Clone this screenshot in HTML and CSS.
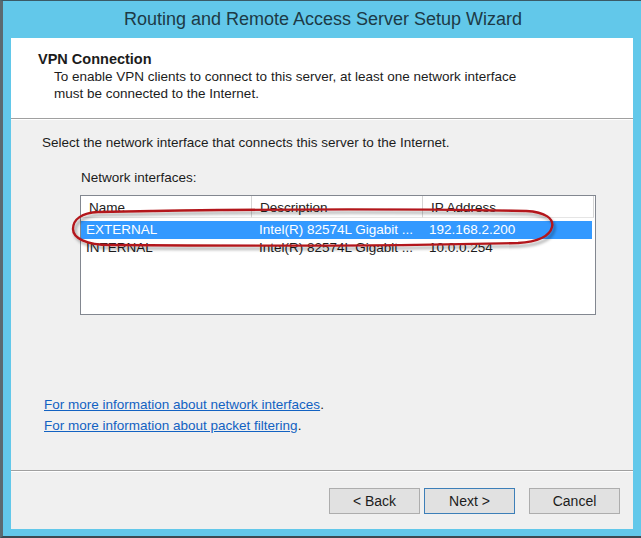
FILE: index.html
```html
<!DOCTYPE html>
<html>
<head>
<meta charset="utf-8">
<link rel="stylesheet" href="styles.css">
</head>
<body>
<div class="window">
  <div class="titlebar">Routing and Remote Access Server Setup Wizard</div>
  <div class="client">
    <div class="header">
      <div class="h-title">VPN Connection</div>
      <div class="h-sub">To enable VPN clients to connect to this server, at least one network interface<br>must be connected to the Internet.</div>
    </div>
    <div class="body">
      <div class="prompt">Select the network interface that connects this server to the Internet.</div>
      <div class="label">Network interfaces:</div>
      <div class="listview">
        <div class="lv-head">
          <div class="col c1">Name</div>
          <div class="col c2">Description</div>
          <div class="col c3">IP Address</div>
        </div>
        <div class="row selected">
          <div class="cell c1">EXTERNAL</div>
          <div class="cell c2">Intel(R) 82574L Gigabit ...</div>
          <div class="cell c3">192.168.2.200</div>
        </div>
        <div class="row">
          <div class="cell c1">INTERNAL</div>
          <div class="cell c2">Intel(R) 82574L Gigabit ...</div>
          <div class="cell c3">10.0.0.254</div>
        </div>
      </div>
      <div class="links">
        <div class="link-line"><a class="link" href="#">For more information about network interfaces</a>.</div>
        <div class="link-line"><a class="link" href="#">For more information about packet filtering</a>.</div>
      </div>
    </div>
    <div class="footer">
      <button class="btn">&lt; Back</button>
      <button class="btn default">Next &gt;</button>
      <button class="btn cancel">Cancel</button>
    </div>
  </div>
  <svg class="annotation" width="641" height="538" viewBox="0 0 641 538">
    <defs>
      <filter id="sh" x="-5%" y="-50%" width="110%" height="200%">
        <feDropShadow dx="2" dy="3" stdDeviation="1.6" flood-color="#000" flood-opacity="0.35"/>
      </filter>
    </defs>
    <path d="M 98 212 C 250 209 420 209 526 211 C 546 212 554 219 552 227 C 550 236 538 242 518 243 C 400 246 240 246 110 245 C 86 245 73 238 73 229 C 73 219 82 213 98 212 Z" fill="none" stroke="#b3191c" stroke-width="2.4" filter="url(#sh)"/>
  </svg>
</div>
</body>
</html>
```
FILE: styles.css
```css
* { box-sizing: border-box; }
html, body { margin: 0; padding: 0; }
body {
  width: 641px;
  height: 538px;
  overflow: hidden;
  font-family: "Liberation Sans", Arial, sans-serif;
  color: #1c1c1c;
}
.window {
  position: relative;
  width: 641px;
  height: 538px;
  background: #62c8ea;
  border-top: 1px solid #3a5a66;
  border-left: 3px solid #5b6a70;
  border-bottom: 2px solid #3b4a52;
  display: flex;
  flex-direction: column;
}
.titlebar {
  height: 37px;
  line-height: 37px;
  text-align: center;
  font-size: 18px;
  color: #1d3a46;
  padding-left: 2px;
}
.client {
  margin: 0 8px 7px 8px;
  flex: 1;
  background: #f0f0f0;
  display: flex;
  flex-direction: column;
}
.header {
  background: #fff;
  height: 81px;
  border-bottom: 1px solid #a0a0a0;
  box-shadow: 0 1px 0 #fff;
  padding-top: 13px;
  font-size: 13.5px;
  line-height: 17px;
}
.h-title {
  font-weight: bold;
  padding-left: 27px;
  font-size: 14.5px;
}
.h-sub {
  padding-left: 43px;
}
.body {
  flex: 1;
  font-size: 13.5px;
  line-height: 17px;
  padding-top: 15px;
  border-bottom: 1px solid #a0a0a0;
}
.prompt { padding-left: 31px; }
.label { padding-left: 70px; margin-top: 18px; }
.listview {
  margin: 9px 0 0 69px;
  width: 516px;
  height: 120px;
  border: 1px solid #828790;
  background: #fff;
}
.lv-head {
  display: flex;
  height: 22px;
  background: #fff;
  margin-bottom: 3px;
}
.col {
  width: 171px;
  padding-left: 8px;
  line-height: 24px;
  border-right: 1px solid #d5d5d5;
  border-bottom: 1px solid #e5e5e5;
  color: #222;
  overflow: hidden;
}
.row {
  display: flex;
  height: 18px;
  line-height: 18px;
  width: 511px;
}
.row.selected {
  background: #3399ff;
  color: #fff;
}
.cell { width: 170px; padding-left: 8px; white-space: nowrap; overflow: hidden; }
.cell.c1 { padding-left: 5px; }
.links {
  margin-top: 81px;
  padding-left: 33px;
}
.link-line { height: 21px; line-height: 17px; }
.link {
  color: #1262c2;
  text-decoration: underline;
}
.footer {
  height: 58px;
  border-top: 1px solid #fff;
  display: flex;
  align-items: flex-start;
  justify-content: flex-end;
  padding: 16px 13px 0 0;
}
.btn {
  width: 91px;
  height: 26px;
  font-family: "Liberation Sans", Arial, sans-serif;
  font-size: 14px;
  color: #1c1c1c;
  background: #e1e1e1;
  border: 1px solid #adadad;
  margin-left: 4px;
  padding: 0;
}
.btn.default { border-color: #3d7fb8; }
.btn.cancel { margin-left: 14px; }
.annotation {
  position: absolute;
  left: -3px;
  top: -1px;
  pointer-events: none;
}
```
